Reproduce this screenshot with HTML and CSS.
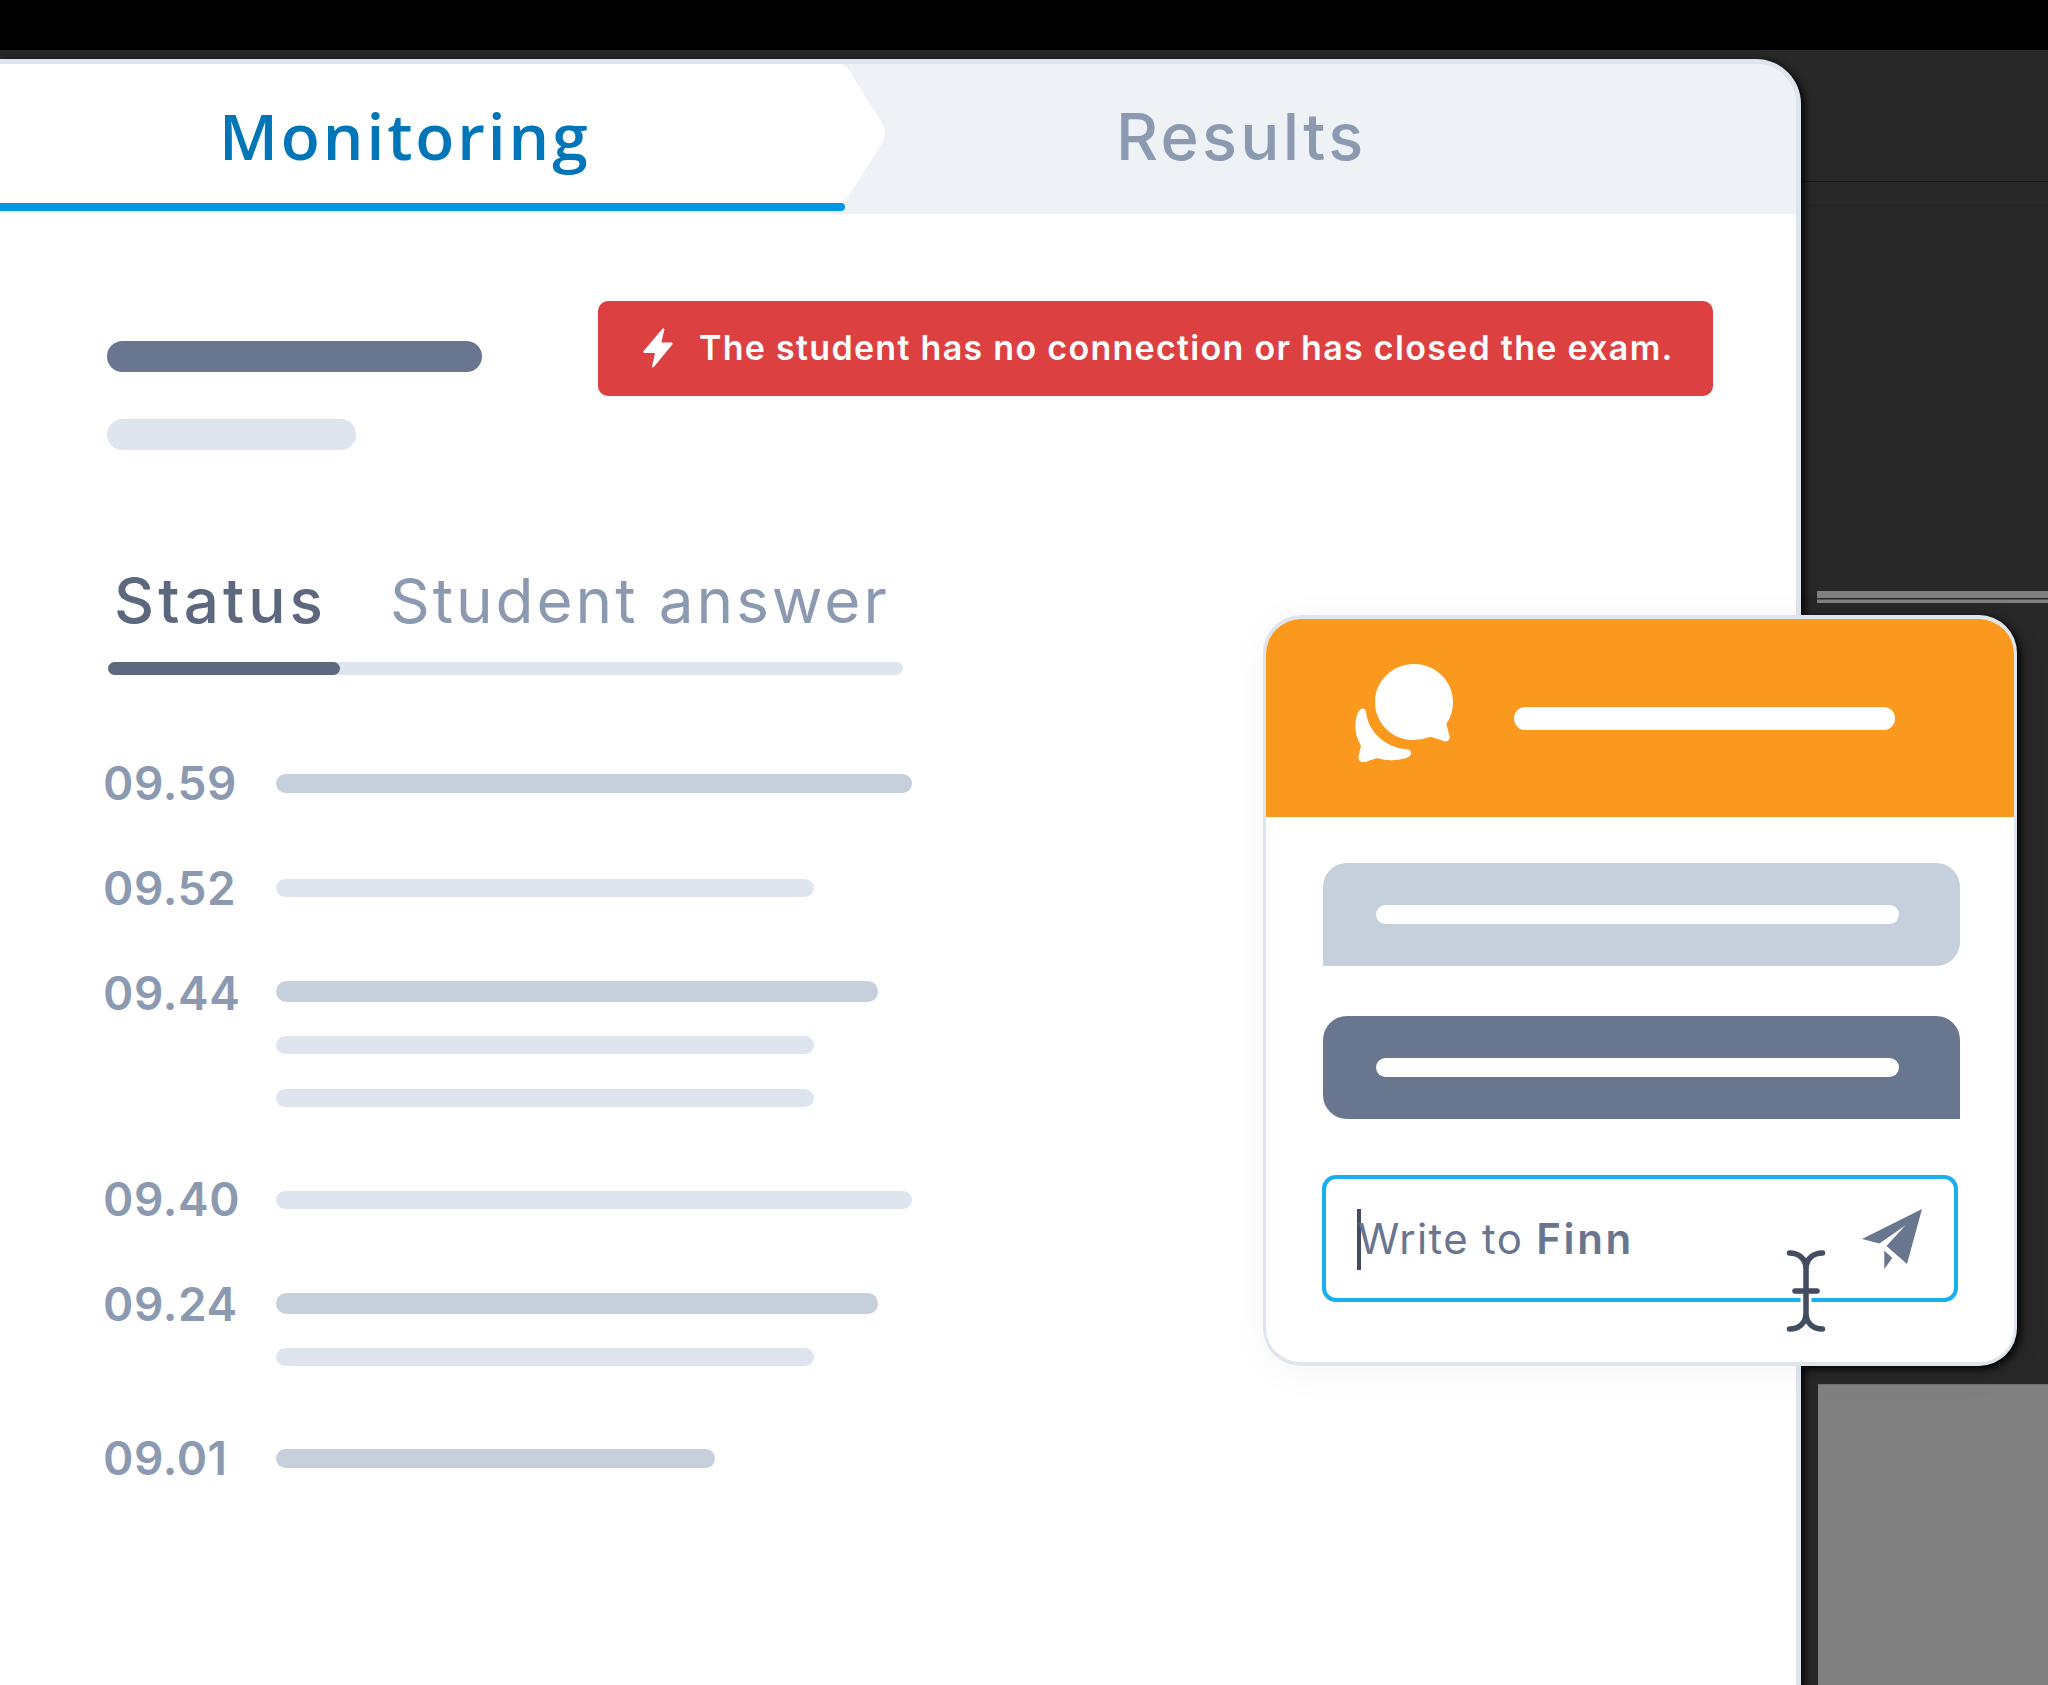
FILE: index.html
```html
<!DOCTYPE html>
<html lang="en">
<head>
<meta charset="utf-8">
<title>Monitoring</title>
<link rel="stylesheet" href="styles.css">
</head>
<body>
<div class="backdrop" aria-hidden="true">
  <div class="band band-top"></div>
  <div class="band band-first"></div>
  <div class="band band-second"></div>
  <div class="band band-stripes"></div>
  <div class="band band-third"></div>
  <div class="band band-gray"></div>
</div>
<div class="card-halo"></div>

<main class="panel">
  <nav class="tabs">
    <a class="tab tab-active">
      <svg class="tab-shape" viewBox="0 0 886 150"><path d="M0 0H838Q846 0 850 8L882 59Q888 69 882 79L850 130Q846 138 838 139H0Z" fill="#fff"/></svg>
      <span class="tab-label">Monitoring</span>
      <span class="tab-line"></span>
    </a>
    <a class="tab tab-results"><span>Results</span></a>
  </nav>

  <header class="head">
    <div class="head-bars">
      <div class="bar name-bar"></div>
      <div class="bar sub-bar"></div>
    </div>
    <div class="alert">
      <svg class="bolt" viewBox="0 0 30 40"><path d="M20.5.4Q21.7.6 21.3 2L18.3 14.6H28.4Q30.2 14.9 29.3 16.6L11 38.8Q9.3 40.4 9 38.5L12 25H1.6Q-.3 24.600 .6 22.900L19 1.2Q19.800.2 20.500.4Z" fill="#fff"/></svg>
      <span class="alert-text">The student has no connection or has closed the exam.</span>
    </div>
  </header>

  <section class="detail">
    <div class="subtabs">
      <span class="subtab-active">Status</span>
      <span class="subtab">Student answer</span>
    </div>
    <div class="track"><div class="track-fill"></div></div>

    <ol class="log">
      <li class="entry"><time>09.59</time><div class="lines"><div class="line"><i class="bar strong w-xl slim"></i></div></div></li>
      <li class="entry"><time>09.52</time><div class="lines"><div class="line"><i class="bar soft w-m"></i></div></div></li>
      <li class="entry multi"><time>09.44</time><div class="lines"><div class="line"><i class="bar strong w-l"></i></div><div class="line"><i class="bar soft w-m"></i></div><div class="line"><i class="bar soft w-m"></i></div></div></li>
      <li class="entry"><time>09.40</time><div class="lines"><div class="line"><i class="bar soft w-xl"></i></div></div></li>
      <li class="entry multi"><time>09.24</time><div class="lines"><div class="line"><i class="bar strong w-l"></i></div><div class="line"><i class="bar soft w-m"></i></div></div></li>
      <li class="entry"><time>09.01</time><div class="lines"><div class="line"><i class="bar strong w-s slim"></i></div></div></li>
    </ol>
  </section>
</main>

<aside class="chat">
  <header class="chat-head">
    <svg class="chat-icon" viewBox="0 0 98 98"><g fill="#fff"><path d="M59 0C80.500 0 98 17 98 38Q98 50 91.300 60L94.700 73Q94.500 78 89.500 77.300L75.500 72.800Q67 76 58 76C37 76 20 59 20 38S37.500 0 59 0Z"/><path d="M7.500 44.500Q11.300 44.300 11.300 50C14 68 30 83 50 85Q56.500 85.200 56 89.500Q55.500 92.500 51 94Q36 98.500 22 94L9.500 98.300Q4 98.800 3.300 93L6 82Q-2 68 1.200 54Q3.500 44.800 7.500 44.500Z"/></g></svg>
    <div class="bar chat-title"></div>
  </header>
  <div class="chat-body">
    <div class="message incoming"><div class="bar"></div></div>
    <div class="message outgoing"><div class="bar"></div></div>
    <div class="field">
      <span class="caret"></span>
      <span class="placeholder">Write to <b>Finn</b></span>
      <svg class="plane" viewBox="0 0 60 61"><path d="M60 0L45 55L24.500 37L43.500 16.300L17.500 34.500L0 30ZM22.300 41.500L30.300 49L22.300 60Z" fill="#69768f"/></svg>
    </div>
  </div>
  <svg class="ibeam" viewBox="0 0 40 84"><path d="M20 46V70" stroke="#fff" stroke-width="11"/><path d="M3.500 4C12 4 20 9 20 20V64C20 75 12 80 3.500 80M36.500 4C28 4 20 9 20 20M20 64C20 75 28 80 36.500 80M9 42H31" fill="none" stroke="#434d61" stroke-width="5.500" stroke-linecap="round"/></svg>
</aside>
</body>
</html>
```

FILE: styles.css
```css
* { box-sizing: border-box; }

body {
  margin: 0;
  width: 2048px;
  height: 1685px;
  padding-top: 59px;
  position: relative;
  overflow: hidden;
  background: #282828;
  font-family: Inter, "Liberation Sans", sans-serif;
}

.backdrop {
  position: absolute;
  inset: 0;
  display: flex;
  flex-direction: column;
}
.band-top { height: 50px; background: #000; }
.band-first { height: 132px; border-bottom: 1px solid #181818; }
.band-second { height: 24px; border-bottom: 1px solid #242424; }
.band-stripes {
  height: 13px;
  margin: 385px 0 0 1817px;
  background: linear-gradient(#808080 0 7px, #282828 7px 8px, #555 8px 9px, #808080 9px 12px, #282828 12px);
}
.band-third { height: 780px; }
.band-gray { flex: 1; margin-left: 1818px; background: #808080; border-top: 1px solid #707070; }

.card-halo {
  position: absolute;
  left: 1263px;
  top: 615px;
  width: 754px;
  height: 751px;
  border-radius: 38px;
  box-shadow: 3px 3px 9px 0 #000;
}

.panel {
  position: relative;
  width: 1801px;
  height: 1626px;
  display: flex;
  flex-direction: column;
  background: #fff;
  border: solid #dfe5ef;
  border-width: 5px 5px 0 0;
  border-radius: 0 45px 0 0;
  box-shadow: 3px 3px 8px 0 #000;
}

.tabs {
  height: 150px;
  display: flex;
  background: #eef2f7;
  border-radius: 0 40px 0 0;
}
.tab { position: relative; display: flex; font-weight: 500; }
.tab-active { width: 886px; padding-left: 219px; color: #0076b8; }
.tab-shape { position: absolute; left: 0; top: 0; width: 886px; height: 150px; }
.tab-label {
  position: relative;
  font: 600 64px/143px "Open Sans", sans-serif;
  letter-spacing: 2.900px;
}
.tab-line {
  position: absolute;
  left: 0;
  bottom: 3px;
  width: 845px;
  height: 8px;
  border-radius: 0 4px 4px 0;
  background: #0096e6;
}
.tab-results {
  padding-left: 230px;
  color: #8c9ab1;
  font-size: 65px;
  line-height: 146px;
  letter-spacing: 3.300px;
}

.bar { display: block; border-radius: 99px; }

.head {
  display: flex;
  height: 236px;
  padding: 87px 83px 0 107px;
  justify-content: space-between;
  align-items: flex-start;
}
.head-bars { padding-top: 40px; display: grid; gap: 47px; }
.name-bar { width: 375px; height: 31px; background: #69768f; }
.sub-bar { width: 249px; height: 31px; background: #dee5ef; }
.alert {
  width: 1115px;
  height: 94.500px;
  padding-left: 45px;
  display: flex;
  align-items: center;
  gap: 26px;
  border-radius: 10px;
  background: #dc4041;
  color: #fff;
}
.bolt { width: 30px; height: 40px; }
.alert-text { font-size: 34px; font-weight: 600; line-height: 40px; letter-spacing: 1.290px; white-space: nowrap; }

.detail { padding: 121px 0 0 106px; }
.subtabs {
  display: flex;
  gap: 65px;
  padding-left: 8px;
  font-size: 62px;
  line-height: 60px;
  letter-spacing: 2.950px;
  white-space: nowrap;
  color: #8c9ab1;
}
.subtab-active { width: 211px; font-weight: 500; letter-spacing: 4.100px; color: #5c687e; }
.track {
  width: 795px;
  height: 13px;
  margin: 31px 0 0 2px;
  border-radius: 7px;
  background: #dee5ef;
}
.track-fill { width: 232px; height: 13px; border-radius: 7px; background: #5c687e; }

.log {
  margin: 92px 0 0;
  padding: 0;
  list-style: none;
  display: flex;
  flex-direction: column;
  gap: 71.800px;
}
.entry { display: grid; grid-template-columns: 170px 1fr; }
.entry time {
  height: 33px;
  margin-left: -3px;
  color: #8c9ab1;
  font-size: 46px;
  font-weight: 600;
  line-height: 33px;
  letter-spacing: .6px;
}
.lines { display: grid; gap: 24.500px; }
.line { height: 28px; display: flex; align-items: center; }
.line:first-child { height: 33px; }
.multi .line:first-child { height: 30px; }
.strong { height: 21px; background: #c6cfdc; }
.soft { height: 18px; background: #dee5ef; }
.slim { height: 19px; }
.w-xl { width: 636px; }
.w-l { width: 602px; }
.w-m { width: 538px; }
.w-s { width: 439px; }

.chat {
  position: absolute;
  left: 1263px;
  top: 615px;
  width: 754px;
  height: 751px;
  border: 3px solid #dfe5ef;
  border-top-width: 4px;
  border-bottom-width: 4px;
  border-radius: 38px;
  background: #fff;
  box-shadow: 0 6px 40px rgba(0, 0, 0, .045);
}
.chat-head {
  height: 198px;
  padding: 0 0 0 89px;
  display: flex;
  align-items: center;
  gap: 61px;
  border-radius: 35px 35px 0 0;
  background: #fb991e;
}
.chat-icon { width: 98px; height: 98px; margin-top: -10px; }
.chat-title { width: 381px; height: 23px; background: #fff; }
.chat-body { padding: 46px 0 0 57px; }
.message {
  width: 637px;
  height: 103px;
  margin-bottom: 50px;
  padding: 42px 61px 0 53px;
}
.message .bar { height: 19px; background: #fff; }
.incoming { background: #c6cfdc; border-radius: 24px 24px 24px 0; }
.outgoing { background: #69768f; border-radius: 24px 24px 0 24px; margin-bottom: 56px; }
.field {
  width: 636px;
  height: 127px;
  margin-left: -1px;
  padding: 1px 32px 0 31px;
  display: flex;
  align-items: center;
  border: 4.500px solid #19aeef;
  border-radius: 14px;
  color: #69768f;
}
.caret { width: 4px; height: 61px; margin-right: -3px; background: #434d61; }
.placeholder { flex: 1; font-size: 42px; line-height: 50px; letter-spacing: 1.300px; white-space: nowrap; }
.placeholder b { font-weight: 600; letter-spacing: 2.600px; }
.plane { width: 60px; height: 61px; }
.ibeam { position: absolute; left: 520px; top: 630px; width: 40px; height: 84px; }
```
